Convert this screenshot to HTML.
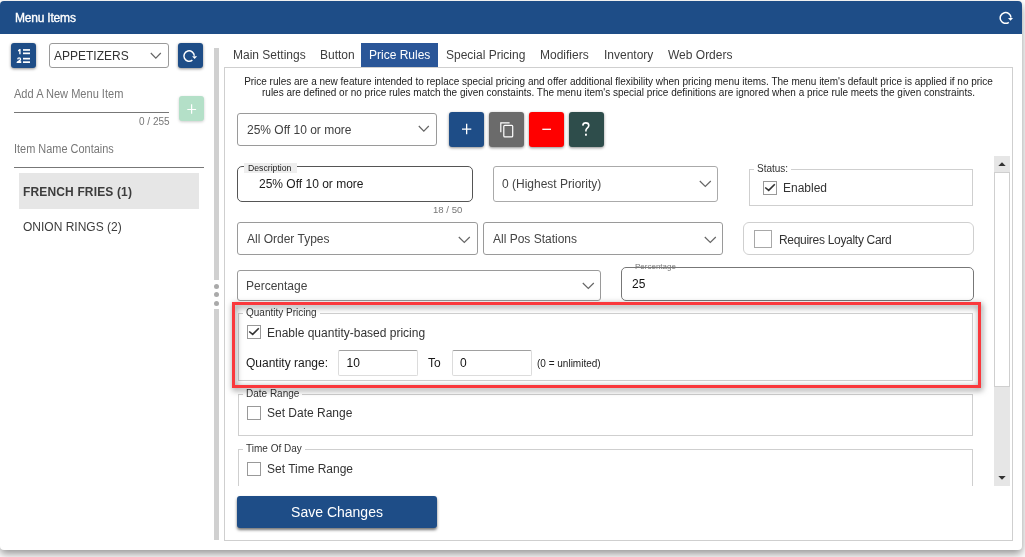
<!DOCTYPE html>
<html><head><meta charset="utf-8">
<style>
html,body{margin:0;padding:0;background:#fff;width:1025px;height:557px;overflow:hidden}
body{font-family:"Liberation Sans",sans-serif;color:#333;position:relative}
.a{position:absolute}
.t{position:absolute;line-height:1;white-space:nowrap}
.f12{font-size:12px}
.f10{font-size:10px}
.card{left:0;top:1px;width:1022px;height:549px;background:#fff;border-radius:4px;box-shadow:0 4px 8px rgba(0,0,0,.42)}
.hdr{left:0;top:1px;width:1022px;height:33px;background:#1e4d87;border-radius:4px 4px 0 0}
.btn{position:absolute;background:#1e4d87;border-radius:3px;box-shadow:0 1px 3px rgba(0,0,0,.45)}
.sel{position:absolute;box-sizing:border-box;border:1px solid #9a9a9a;border-radius:3px;background:#fff}
.fs{position:absolute;box-sizing:border-box;border:1px solid #cfcfcf}
.lbl{position:absolute;line-height:1;white-space:nowrap;font-size:10px;background:#fff;padding:0 3px;color:#333}
.cb{position:absolute;box-sizing:border-box;border:1px solid #999;background:#fff;width:14px;height:14px}
.inp{position:absolute;box-sizing:border-box;border:1px solid #dcdcdc;border-top-color:#a0a0a0;border-radius:2px;background:#fff}
</style></head><body><div style="position:absolute;left:0;top:0;width:1025px;height:557px;will-change:transform">
<div class="a card"></div>
<div class="a hdr"></div>
<div class="t f12" style="left:15px;top:12px;color:#fff;-webkit-text-stroke:0.35px #fff;letter-spacing:-0.2px">Menu Items</div>
<svg class="a" style="left:997px;top:9px" width="18" height="18" viewBox="0 0 18 18">
  <path d="M14 8.6 A5.4 5.4 0 1 0 11.8 13.3" fill="none" stroke="#fff" stroke-width="1.5"/>
  <path d="M11 8.9 L16.1 8.9 L13.5 11.8 Z" fill="#fff"/>
</svg>

<!-- left panel -->
<div class="btn" style="left:11px;top:43px;width:25px;height:25px"></div>
<svg class="a" style="left:11px;top:43px" width="25" height="25" viewBox="0 0 25 25">
  <path d="M7 7.3 L8.4 6.1 L9.6 6.1 L9.6 11.2 L8.2 11.2 L8.2 7.9 L7 8.5 Z" fill="#fff"/>
  <path d="M6.7 16.3 Q6.9 14.9 8.1 14.9 Q9.5 14.9 9.5 16.2 Q9.5 17.1 8.3 17.9 L7 18.9 L10.2 18.9" fill="none" stroke="#fff" stroke-width="1.4"/>
  <rect x="6" y="18.6" width="4.2" height="1.4" fill="#fff"/>
  <rect x="12" y="6.1" width="7" height="1.7" fill="#fff"/>
  <rect x="12" y="9.5" width="7" height="1.7" fill="#fff"/>
  <rect x="12" y="14.8" width="7" height="1.7" fill="#fff"/>
  <rect x="12" y="18.3" width="7" height="1.7" fill="#fff"/>
</svg>
<div class="sel" style="left:49px;top:43px;width:120px;height:25px"></div>
<div class="t f12" style="left:54px;top:50px;color:#333">APPETIZERS</div>
<svg class="a" style="left:150px;top:52px" width="12" height="8" viewBox="0 0 12 8"><path d="M0.8 1 L5.8 6.2 L10.8 1" fill="none" stroke="#666" stroke-width="1.2"/></svg>
<div class="btn" style="left:178px;top:43px;width:25px;height:25px"></div>
<svg class="a" style="left:177px;top:43px" width="26" height="25" viewBox="0 0 26 25">
  <path d="M17.3 12.8 A5.2 5.2 0 1 0 15.4 17.1" fill="none" stroke="#fff" stroke-width="1.5"/>
  <path d="M15.1 13.2 L20.1 13.2 L17.6 16 Z" fill="#fff"/>
</svg>

<div class="t" style="left:14px;top:88px;font-size:12px;color:#777;transform:scaleX(0.921);transform-origin:0 0">Add A New Menu Item</div>
<div class="a" style="left:14px;top:112px;width:155px;height:1px;background:#777"></div>
<div class="t" style="left:139px;top:117px;font-size:10px;color:#777">0 / 255</div>
<div class="a" style="left:179px;top:96px;width:25px;height:25px;background:#b4e0c8;border-radius:3px;box-shadow:0 1px 3px rgba(0,0,0,.2)"></div>
<svg class="a" style="left:179px;top:96px" width="25" height="25" viewBox="0 0 25 25"><path d="M8.3 13.5 H17.1 M12.6 8.3 V17.8" stroke="#fff" stroke-width="1.2"/></svg>

<div class="t" style="left:14px;top:143px;font-size:12px;color:#777;transform:scaleX(0.912);transform-origin:0 0">Item Name Contains</div>
<div class="a" style="left:14px;top:167px;width:190px;height:1px;background:#777"></div>
<div class="a" style="left:19px;top:173px;width:180px;height:36px;background:#e6e6e6"></div>
<div class="t f12" style="left:23px;top:186px;font-weight:bold;color:#3c3c3c;letter-spacing:0.15px">FRENCH FRIES (1)</div>
<div class="t f12" style="left:23px;top:221px;color:#3c3c3c">ONION RINGS (2)</div>

<!-- splitter -->
<div class="a" style="left:214px;top:48px;width:5px;height:232px;background:#d0d0d0"></div>
<div class="a" style="left:214px;top:309px;width:5px;height:231px;background:#d0d0d0"></div>
<div class="a" style="left:214px;top:284px;width:5px;height:5px;border-radius:50%;background:#aaa"></div>
<div class="a" style="left:214px;top:292px;width:5px;height:5px;border-radius:50%;background:#aaa"></div>
<div class="a" style="left:214px;top:301px;width:5px;height:5px;border-radius:50%;background:#aaa"></div>

<!-- tabs -->
<div class="t f12" style="left:233px;top:49px;color:#3d3d3d">Main Settings</div>
<div class="t f12" style="left:320px;top:49px;color:#3d3d3d">Button</div>
<div class="a" style="left:361px;top:43px;width:77px;height:24px;background:#2a5698"></div>
<div class="t f12" style="left:369px;top:49px;color:#fff">Price Rules</div>
<div class="t f12" style="left:446px;top:49px;color:#3d3d3d">Special Pricing</div>
<div class="t f12" style="left:540px;top:49px;color:#3d3d3d">Modifiers</div>
<div class="t f12" style="left:604px;top:49px;color:#3d3d3d">Inventory</div>
<div class="t f12" style="left:668px;top:49px;color:#3d3d3d">Web Orders</div>

<!-- panel -->
<div class="a" style="left:224px;top:67px;width:787px;height:472px;border:1px solid #cfcfcf"></div>
<div class="t f10" style="left:223.5px;top:75.6px;width:790px;text-align:center;color:#222;line-height:11.4px;letter-spacing:-0.012px">Price rules are a new feature intended to replace special pricing and offer additional flexibility when pricing menu items. The menu item's default price is applied if no price<br>rules are defined or no price rules match the given constaints. The menu item's special price definitions are ignored when a price rule meets the given constraints.</div>

<!-- row 1 -->
<div class="sel" style="left:237px;top:113px;width:200px;height:33px"></div>
<div class="t f12" style="left:247px;top:124px;color:#404040">25% Off 10 or more</div>
<svg class="a" style="left:418px;top:125px" width="12" height="8" viewBox="0 0 12 8"><path d="M0.8 1 L5.8 6.2 L10.8 1" fill="none" stroke="#666" stroke-width="1.2"/></svg>
<div class="btn" style="left:449px;top:112px;width:35px;height:35px"></div>
<div class="btn" style="left:489px;top:112px;width:35px;height:35px;background:#6b6b6b"></div>
<div class="btn" style="left:529px;top:112px;width:35px;height:35px;background:#ff0000"></div>
<div class="btn" style="left:569px;top:112px;width:35px;height:35px;background:#2e4d4b"></div>
<svg class="a" style="left:449px;top:112px" width="160" height="35" viewBox="0 0 160 35">
  <path d="M13 17.2 H22.3 M17.65 11.7 V22.2" stroke="#fff" stroke-width="1.3"/>
  <path d="M51.8 20.3 V10.8 H60.6" fill="none" stroke="#fff" stroke-width="1.2"/>
  <rect x="54.8" y="13.3" width="8.9" height="11.6" rx="1" fill="none" stroke="#fff" stroke-width="1.2"/>
  <path d="M93.3 17.3 H102" stroke="#fff" stroke-width="1.3"/>
  <path transform="translate(-0.7 0)" d="M134.5 13.6 C134.6 11.6 135.9 10.9 137.5 10.9 C139.3 10.9 140.5 12 140.5 13.5 C140.5 14.9 139.6 15.6 138.7 16.3 C137.9 16.9 137.6 17.5 137.6 18.7 V19.6" fill="none" stroke="#fff" stroke-width="1.6"/><rect x="136" y="21.7" width="1.9" height="2" fill="#fff"/>
</svg>

<!-- row 2 -->
<div class="a" style="left:237px;top:166px;width:234px;height:34px;border:1px solid #555;border-radius:5px"></div>
<div class="t" style="left:244px;top:163px;width:53px;height:10px;background:#eee"></div>
<div class="t" style="left:248px;top:164px;font-size:8.7px;color:#222">Description</div>
<div class="t f12" style="left:259px;top:178px;color:#1a1a1a">25% Off 10 or more</div>
<div class="t" style="left:433px;top:205px;font-size:9.6px;color:#777">18 / 50</div>

<div class="sel" style="left:493px;top:166px;width:225px;height:36px;border-color:#aaa"></div>
<div class="t f12" style="left:502px;top:178px;color:#444">0 (Highest Priority)</div>
<svg class="a" style="left:699px;top:180px" width="13" height="8" viewBox="0 0 13 8"><path d="M0.8 1 L6.3 6.4 L11.8 1" fill="none" stroke="#666" stroke-width="1.2"/></svg>

<div class="fs" style="left:749px;top:169px;width:224px;height:37px"></div>
<div class="lbl" style="left:754px;top:164px">Status:</div>
<div class="cb" style="left:763px;top:181px"></div>
<svg class="a" style="left:763px;top:181px" width="14" height="14" viewBox="0 0 14 14"><path d="M2.2 6.5 L5.7 9.4 L11.8 3.2" fill="none" stroke="#333" stroke-width="1.6"/></svg>
<div class="t f12" style="left:783px;top:182px">Enabled</div>

<!-- row 3 -->
<div class="sel" style="left:237px;top:222px;width:241px;height:33px"></div>
<div class="t f12" style="left:247px;top:233px;color:#444">All Order Types</div>
<svg class="a" style="left:458px;top:235.5px" width="13" height="8" viewBox="0 0 13 8"><path d="M0.8 1 L6.3 6.4 L11.8 1" fill="none" stroke="#666" stroke-width="1.2"/></svg>
<div class="sel" style="left:483px;top:222px;width:240px;height:33px"></div>
<div class="t f12" style="left:493px;top:233px;color:#444">All Pos Stations</div>
<svg class="a" style="left:704px;top:235.5px" width="13" height="8" viewBox="0 0 13 8"><path d="M0.8 1 L6.3 6.4 L11.8 1" fill="none" stroke="#666" stroke-width="1.2"/></svg>
<div class="a" style="left:743px;top:222px;width:229px;height:31px;border:1px solid #cfcfcf;border-radius:6px"></div>
<div class="cb" style="left:754px;top:230px;width:18px;height:18px;border-color:#a8a8a8"></div>
<div class="t f12" style="left:779px;top:234px;letter-spacing:-0.3px">Requires Loyalty Card</div>

<!-- row 4 -->
<div class="sel" style="left:237px;top:270px;width:364px;height:31px"></div>
<div class="t f12" style="left:246px;top:280px;color:#444">Percentage</div>
<svg class="a" style="left:581.5px;top:282px" width="13" height="8" viewBox="0 0 13 8"><path d="M0.8 1 L6.3 6.4 L11.8 1" fill="none" stroke="#666" stroke-width="1.2"/></svg>
<div class="a" style="left:621px;top:267px;width:351px;height:32px;border:1px solid #777;border-radius:5px"></div>
<div class="t" style="left:635px;top:263px;font-size:8px;color:#777">Percentage</div>
<div class="t f12" style="left:632px;top:278px;color:#111">25</div>

<!-- quantity pricing -->
<div class="fs" style="left:238px;top:313px;width:735px;height:68px"></div>
<div class="lbl" style="left:243px;top:308px">Quantity Pricing</div>
<div class="cb" style="left:247px;top:325px"></div>
<svg class="a" style="left:247px;top:325px" width="14" height="14" viewBox="0 0 14 14"><path d="M2.2 6.5 L5.7 9.4 L11.8 3.2" fill="none" stroke="#333" stroke-width="1.6"/></svg>
<div class="t f12" style="left:267px;top:327px">Enable quantity-based pricing</div>
<div class="t f12" style="left:246px;top:357px;color:#1a1a1a">Quantity range:</div>
<div class="inp" style="left:338px;top:350px;width:80px;height:26px"></div>
<div class="t f12" style="left:346.5px;top:357px;color:#111">10</div>
<div class="t f12" style="left:428px;top:357px;color:#1a1a1a">To</div>
<div class="inp" style="left:452px;top:350px;width:80px;height:26px"></div>
<div class="t f12" style="left:460px;top:357px;color:#111">0</div>
<div class="t f10" style="left:537px;top:359px;color:#222">(0 = unlimited)</div>

<!-- red annotation -->
<div class="a" style="left:232px;top:302px;width:743px;height:80px;border:3px solid #fa383c;z-index:5;filter:drop-shadow(1px 2px 3px rgba(0,0,0,.55))"></div>

<!-- date range -->
<div class="fs" style="left:238px;top:394px;width:735px;height:42px"></div>
<div class="lbl" style="left:243px;top:389px">Date Range</div>
<div class="cb" style="left:247px;top:406px"></div>
<div class="t f12" style="left:267px;top:407px">Set Date Range</div>

<!-- time of day (clipped) -->
<div class="a" style="left:230px;top:440px;width:760px;height:46px;overflow:hidden">
  <div class="fs" style="left:8px;top:9px;width:735px;height:60px"></div>
  <div class="lbl" style="left:13px;top:4px">Time Of Day</div>
  <div class="cb" style="left:17px;top:22px"></div>
  <div class="t f12" style="left:37px;top:23px">Set Time Range</div>
</div>

<!-- scrollbar -->
<div class="a" style="left:994px;top:156px;width:16px;height:330px;background:#e6e6e6"></div>
<div class="a" style="left:994px;top:172px;width:14px;height:213px;background:#fff;border:1px solid #cfcfcf"></div>
<svg class="a" style="left:994px;top:156px" width="16" height="330" viewBox="0 0 16 330">
  <path d="M4.3 10 L11.7 10 L8 6.2 Z" fill="#333"/>
  <path d="M4.3 320 L11.7 320 L8 323.8 Z" fill="#333"/>
</svg>

<!-- save -->
<div class="btn" style="left:237px;top:496px;width:200px;height:32px;box-shadow:0 2px 3px rgba(0,0,0,.55)"></div>
<div class="t" style="left:237px;top:505px;width:200px;text-align:center;font-size:14px;color:#fff">Save Changes</div>
</div></body></html>
